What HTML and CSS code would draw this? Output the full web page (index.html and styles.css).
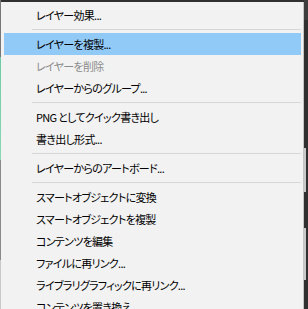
FILE: index.html
```html
<!DOCTYPE html>
<html lang="ja">
<head>
    <meta charset="UTF-8">
    <title>レイヤーメニュー</title>
    <link rel="stylesheet" href="styles.css">
</head>
<body>
    <!-- コンテキストメニュー -->
    <div class="menu">
        <div class="item">レイヤー効果...</div>
        <div class="sep"></div>
        <div class="item active">レイヤーを複製...</div>
        <div class="item disabled">レイヤーを削除</div>
        <div class="item">レイヤーからのグループ...</div>
        <div class="sep"></div>
        <div class="item">PNG としてクイック書き出し</div>
        <div class="item">書き出し形式...</div>
        <div class="sep"></div>
        <div class="item">レイヤーからのアートボード...</div>
        <div class="sep"></div>
        <div class="item">スマートオブジェクトに変換</div>
        <div class="item">スマートオブジェクトを複製</div>
        <div class="item">コンテンツを編集</div>
        <div class="item">ファイルに再リンク...</div>
        <div class="item">ライブラリグラフィックに再リンク...</div>
        <div class="item">コンテンツを置き換え</div>
    </div>
</body>
</html>
```

FILE: styles.css
```css
html, body {
    margin: 0;
    padding: 0;
    height: 100%;
    overflow: hidden;
}

/* 背景のアプリ画面 */
body {
    padding: 2px 0 0 1px;
    box-sizing: border-box;
    background:
        linear-gradient(#777, #777) 0 0 / 1px 57px no-repeat,
        linear-gradient(#6dcca6, #8ad8b8) 0 57px / 1px 103px no-repeat,
        linear-gradient(#8a8a8a, #8a8a8a) 0 160px / 1px 100px no-repeat,
        linear-gradient(#c9c9c9, #c9c9c9) 0 260px / 1px 49px no-repeat,
        linear-gradient(#c8c8c8, #c8c8c8) 304px 148px / 2px 44px no-repeat,
        linear-gradient(#c8c8c8, #c8c8c8) 304px 228px / 2px 52px no-repeat,
        linear-gradient(#3d3d3d, #3d3d3d) 304px 0 / 4px 20px no-repeat,
        #303030;
    font-family: "Noto Sans CJK JP", "Noto Sans", sans-serif;
    font-size: 11px;
    color: #000;
}

.menu {
    width: 302px;
    background-color: #f2f2f2;
    border-right: 1px solid #c4c4c4;
    padding-top: 2px;
}

.item {
    height: 22px;
    line-height: 22px;
    margin: 0 2px 0 3px;
    padding-left: 32px;
    white-space: nowrap;
    letter-spacing: -0.7px;
    font-feature-settings: "palt";
}

.item.active {
    background-color: #91c9f7;
}

.item.disabled {
    color: #8c8c8c;
}

.sep {
    height: 1px;
    margin: 3px 2px 3px 31px;
    background-color: #d7d7d7;
}
```
